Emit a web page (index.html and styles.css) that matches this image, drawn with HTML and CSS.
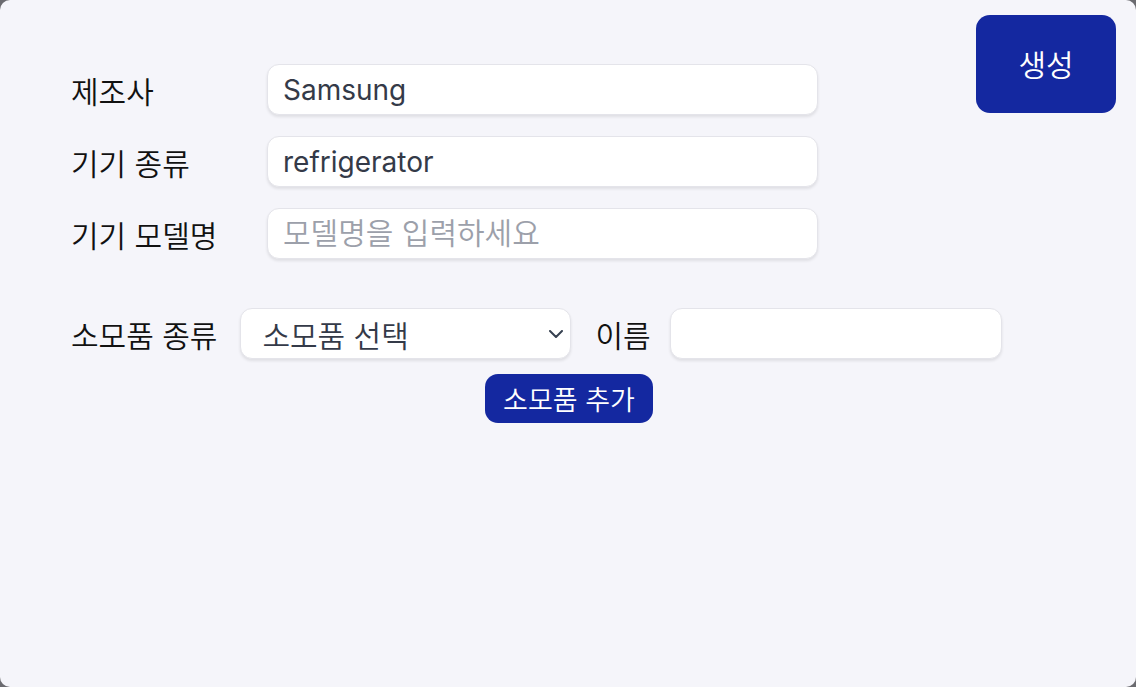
FILE: index.html
```html
<!DOCTYPE html>
<html lang="ko">
<head>
<meta charset="utf-8">
<title>기기 등록</title>
<link rel="stylesheet" href="styles.css">
</head>
<body>
<main class="page">
  <section class="top">
    <div class="fields">
      <label class="label" for="maker">제조사</label>
      <input class="field" id="maker" type="text" value="Samsung">
      <label class="label" for="kind">기기 종류</label>
      <input class="field" id="kind" type="text" value="refrigerator">
      <label class="label" for="model">기기 모델명</label>
      <input class="field" id="model" type="text" placeholder="모델명을 입력하세요">
    </div>
    <button class="create" type="button">생성</button>
  </section>
  <section class="consumables">
    <div class="row">
      <label class="label" for="ctype">소모품 종류</label>
      <div class="select-wrap">
        <select class="select" id="ctype">
          <option>소모품 선택</option>
        </select>
        <svg class="chevron" width="14" height="8" viewBox="0 0 14 8"><path d="M1 1l6 6 6-6" fill="none" stroke="#374151" stroke-width="2" stroke-linecap="round" stroke-linejoin="round"/></svg>
      </div>
      <label class="label name-label" for="cname">이름</label>
      <input class="field small" id="cname" type="text">
    </div>
    <div class="actions">
      <button class="add" type="button">소모품 추가</button>
    </div>
  </section>
</main>
</body>
</html>
```

FILE: styles.css
```css
* { box-sizing: border-box; }
html { background: #6b6b70; height: 100%; }
body {
  margin: 0;
  height: 100%;
  background: #f5f5fa;
  border-radius: 10px;
  font-family: "Noto Sans CJK KR", sans-serif;
  overflow: hidden;
}
.page { min-height: 100%; }
.top {
  display: flex;
  justify-content: space-between;
  align-items: flex-start;
  padding: 15px 20px 0 71px;
}
.fields {
  margin-top: 49px;
  display: grid;
  grid-template-columns: 196px 551px;
  row-gap: 21px;
  align-items: center;
}
.label {
  font-size: 30px;
  font-weight: 350;
  color: #111;
  line-height: 1.2;
  white-space: nowrap;
}
.field {
  height: 51px;
  width: 100%;
  border: 1px solid #e4e4ea;
  border-radius: 12px;
  background: #fff;
  box-shadow: 0 2px 3px rgba(0, 0, 0, 0.09);
  padding: 0 15px;
  font-family: Inter, "Noto Sans CJK KR", sans-serif;
  font-size: 28px;
  color: #343a48;
  outline: none;
}
.field::placeholder {
  color: #9ca0aa;
  font-family: "Noto Sans CJK KR", sans-serif;
  font-size: 30px;
  font-weight: 350;
}
.field.small { width: 332px; }
.create {
  width: 140px;
  height: 98px;
  border: none;
  border-radius: 14px;
  background: #1428a0;
  color: #fff;
  font-family: "Noto Sans CJK KR", sans-serif;
  font-size: 30px;
  font-weight: 350;
  padding: 0 0 3px;
}
.consumables {
  margin-top: 49px;
}
.row {
  display: flex;
  align-items: center;
  gap: 23px;
  padding-left: 71px;
}
.name-label { margin-left: 1px; margin-right: -4px; }
.select-wrap { position: relative; }
.select {
  appearance: none;
  -webkit-appearance: none;
  width: 331px;
  height: 51px;
  border: 1px solid #e4e4ea;
  border-radius: 12px;
  background: #fff;
  box-shadow: 0 2px 3px rgba(0, 0, 0, 0.09);
  padding: 0 21px;
  font-family: "Noto Sans CJK KR", sans-serif;
  font-size: 30px;
  font-weight: 350;
  color: #343a48;
  outline: none;
}
.chevron {
  position: absolute;
  right: 8px;
  top: 22px;
  pointer-events: none;
}
.actions {
  display: flex;
  justify-content: center;
  margin-top: 15px;
  padding-left: 2px;
}
.add {
  width: 168px;
  height: 49px;
  border: none;
  border-radius: 13px;
  background: #1428a0;
  color: #fff;
  font-family: "Noto Sans CJK KR", sans-serif;
  font-size: 27px;
  font-weight: 350;
  padding: 0;
}
```
